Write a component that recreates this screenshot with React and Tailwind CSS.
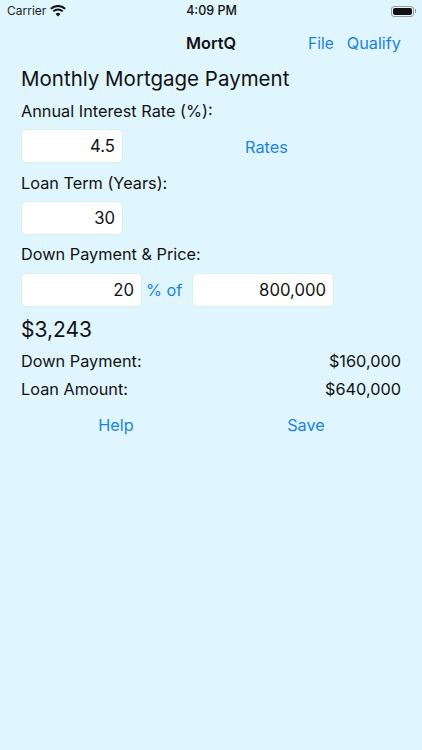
const font = { fontFamily: 'Inter, "Noto Sans", sans-serif' };

function Field({ value, className }) {
  return (
    <div className={`h-[34px] bg-white rounded-[5px] border border-[#d8eef7] flex items-center justify-end pt-[2px] pr-[7px] text-[16.7px] text-[#111] ${className}`}>
      {value}
    </div>
  );
}

function Label({ children }) {
  return <div className="h-[20px] leading-[20px] text-[16.3px] text-[#111]">{children}</div>;
}

function Wifi() {
  return (
    <svg width="16" height="12" viewBox="0 0 16 12" className="ml-[4px]">
      <path d="M8 11.5 5.6 8.9a3.4 3.4 0 0 1 4.8 0L8 11.5Z" fill="#111" />
      <path d="M3.9 7.1a5.9 5.9 0 0 1 8.2 0l1.3-1.4a7.8 7.8 0 0 0-10.8 0l1.3 1.4Z" fill="#111" />
      <path d="M1.5 4.6a9.4 9.4 0 0 1 13 0L15.8 3.2a11.3 11.3 0 0 0-15.6 0l1.3 1.4Z" fill="#111" />
    </svg>
  );
}

function Battery() {
  return (
    <div className="flex items-center">
      <div className="w-[23px] h-[11px] rounded-[3px] border border-[#9a9a9a] p-[1px]">
        <div className="w-full h-full rounded-[2px] bg-[#111]" />
      </div>
      <div className="w-[1px] h-[4px] bg-[#9a9a9a] ml-[1px]" />
    </div>
  );
}

export default function App() {
  return (
    <div style={font} className="w-[422px] h-[750px] bg-[#e0f6ff] overflow-hidden">
      {/* status bar */}
      <div className="h-[22px] pl-[7px] pr-[6px] grid grid-cols-3 items-center text-[#111]">
        <div className="flex items-center text-[12px] text-[#222]">Carrier<Wifi /></div>
        <div className="text-center text-[12.5px] font-medium">4:09 PM</div>
        <div className="flex justify-end"><Battery /></div>
      </div>

      {/* nav bar */}
      <div className="relative h-[43px] flex items-center justify-end pr-[21px] text-[16.3px] text-[#1a82e2]">
        <div className="absolute left-0 right-0 text-center font-semibold text-[#111]">MortQ</div>
        <span className="relative mr-[13px] text-[15.5px]">File</span>
        <span className="relative">Qualify</span>
      </div>

      <div className="px-[21px]">
        <div className="h-[28px] leading-[28px] text-[20.5px] text-[#111]">Monthly Mortgage Payment</div>

        <div className="mt-[8px]"><Label>Annual Interest Rate (%):</Label></div>
        <div className="mt-[8px] flex items-center">
          <Field value="4.5" className="w-[102px]" />
          <span className="ml-[122px] pt-[2px] text-[16.3px] text-[#1a82e2]">Rates</span>
        </div>

        <div className="mt-[10px]"><Label>Loan Term (Years):</Label></div>
        <div className="mt-[8px]"><Field value="30" className="w-[102px]" /></div>

        <div className="mt-[9px]"><Label>Down Payment & Price:</Label></div>
        <div className="mt-[9px] flex items-center">
          <Field value="20" className="w-[121px]" />
          <span className="ml-[4px] w-[46px] text-[16.3px] text-[#1a82e2]">% of</span>
          <Field value="800,000" className="w-[142px]" />
        </div>

        <div className="mt-[9px] h-[28px] leading-[28px] text-[21px] text-[#111]">$3,243</div>

        <div className="mt-[7px] h-[20px] leading-[20px] flex justify-between text-[16.3px] text-[#111]">
          <span>Down Payment:</span><span>$160,000</span>
        </div>
        <div className="mt-[8px] h-[20px] leading-[20px] flex justify-between text-[16.3px] text-[#111]">
          <span>Loan Amount:</span><span>$640,000</span>
        </div>

        <div className="mt-[16px] grid grid-cols-2 text-center text-[16.3px] leading-[20px] text-[#1a82e2]">
          <span>Help</span><span>Save</span>
        </div>
      </div>
    </div>
  );
}
